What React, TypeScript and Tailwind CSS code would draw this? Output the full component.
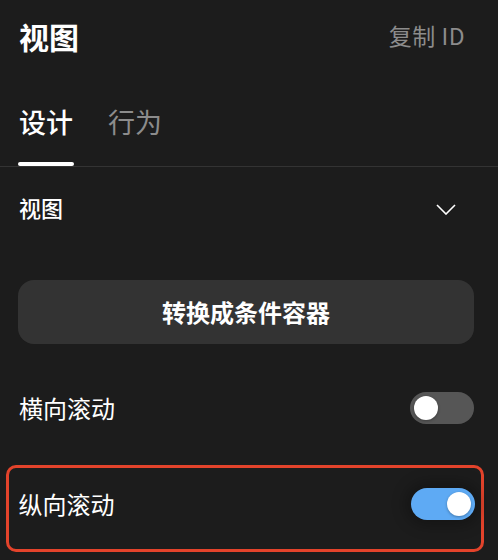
import React from "react";

function Toggle({ on }: { on: boolean }) {
  return (
    <div
      className={`flex h-8 w-16 items-center rounded-full px-1 ${
        on ? "justify-end bg-[#5eaaf4] shadow-[0_0_14px_6px_rgba(0,0,0,0.25)]" : "justify-start bg-[#565656]"
      }`}
    >
      <div className="h-6 w-6 rounded-full bg-white shadow-[0_1px_3px_rgba(0,0,0,0.3)]" />
    </div>
  );
}

export default function App() {
  return (
    <div
      className="h-[560px] w-[498px] overflow-hidden bg-[#1c1c1c] text-white"
      style={{ fontFamily: '"Noto Sans CJK SC", "Noto Sans", sans-serif' }}
    >
      {/* header */}
      <div className="flex h-[74px] items-center justify-between pb-[3px] pl-[19px] pr-[33px]">
        <h1 className="text-[30px] font-bold leading-none">视图</h1>
        <button className="text-[23px] leading-none tracking-[0.5px] text-[#8c8c8c]">复制 ID</button>
      </div>

      {/* tabs */}
      <div className="flex h-[93px] items-end gap-[34px] border-b-[1.5px] border-[#333333] pl-[18px]">
        <div className="flex flex-col items-center">
          <span className="px-px text-[27px] font-medium leading-[36px]">设计</span>
          <div className="mt-[22px] h-1 w-[56px] rounded-full bg-white" />
        </div>
        <div className="flex flex-col items-center">
          <span className="text-[27px] leading-[36px] text-[#8c8c8c]">行为</span>
          <div className="mt-[22px] h-1" />
        </div>
      </div>

      {/* section */}
      <div className="flex h-[80px] items-center justify-between pl-[19px] pr-[42px]">
        <span className="text-[22px] font-medium leading-none">视图</span>
        <svg width="20" height="11" viewBox="0 0 20 11" fill="none" className="mt-1">
          <path d="M1 1l9 9 9-9" stroke="white" strokeWidth="1.6" />
        </svg>
      </div>

      <div className="mt-[33px] px-[18px] pr-[24px]">
        <button className="flex h-16 w-full items-center justify-center rounded-2xl bg-[#333333] text-[24px] font-semibold">
          转换成条件容器
        </button>
      </div>

      <div className="mt-12 flex h-8 items-center justify-between pl-[19px] pr-[24px]">
        <span className="text-[24px] leading-none">横向滚动</span>
        <Toggle on={false} />
      </div>

      <div className="ml-[6px] mr-[14px] mt-[41px] flex h-[87px] items-start justify-between rounded-[10px] border-[3.5px] border-[#e3432b] pl-[9.5px] pr-[6.5px] pt-[19.5px]">
        <span className="flex h-8 items-center text-[24px] leading-none">纵向滚动</span>
        <Toggle on={true} />
      </div>
    </div>
  );
}
